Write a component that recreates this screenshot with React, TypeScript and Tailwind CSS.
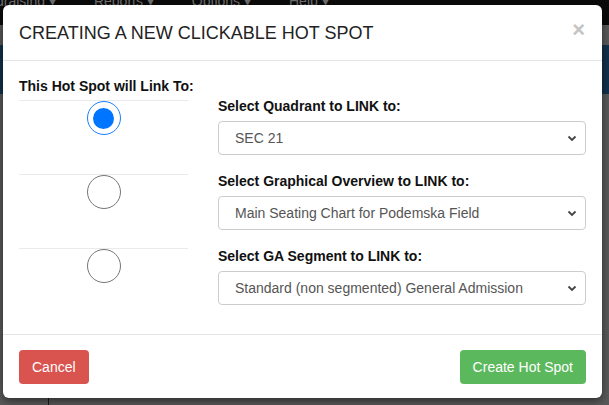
import React from 'react';

const links = [
  { label: "Select Quadrant to LINK to:", value: "SEC 21" },
  { label: "Select Graphical Overview to LINK to:", value: "Main Seating Chart for Podemska Field" },
  { label: "Select GA Segment to LINK to:", value: "Standard (non segmented) General Admission" }
];

function Chevron() {
  return (
    <svg width="10" height="7" viewBox="0 0 10 7" className="shrink-0">
      <path d="M1.5 1.5 L5 5 L8.5 1.5" fill="none" stroke="#444" strokeWidth="1.8" />
    </svg>
  );
}

function Radio({ checked }: { checked?: boolean }) {
  if (checked) {
    return (
      <div className="w-[34px] h-[34px] rounded-full border-[1.5px] border-[#1a7fff] bg-white flex items-center justify-center">
        <div className="w-[21px] h-[21px] rounded-full bg-[#0075ff]" />
      </div>
    );
  }
  return <div className="w-[34px] h-[34px] rounded-full border border-[#767676] bg-white" />;
}

export default function App() {
  return (
    <div className="relative w-[609px] h-[405px] overflow-hidden bg-[#595959]" style={{ fontFamily: "'Liberation Sans', Arial, sans-serif" }}>
      {/* page behind the backdrop */}
      <div className="h-[25px] bg-[#0b0b0b] overflow-hidden">
        <div className="flex gap-[38px] -mt-[9px] text-[14px] text-[#6f6f6f] whitespace-nowrap">
          <span className="-ml-[4px]">draising ▾</span>
          <span>Reports ▾</span>
          <span>Options ▾</span>
          <span>Help ▾</span>
        </div>
      </div>
      <div className="h-[20px]" />
      <div className="h-[49px] bg-[#12304c]" />
      <div className="absolute left-[48px] bottom-0 w-px h-[10px] bg-[#1a1a1a]" />

      {/* modal */}
      <div className="absolute left-[3px] top-[5px] w-[599px] h-[393px] bg-white rounded-[6px] flex flex-col shadow-[0_3px_9px_rgba(0,0,0,0.5)]">
        <div className="h-[56px] flex items-center justify-between pl-4 pr-[17px] border-b border-[#e5e5e5]">
          <h4 className="text-[18px] text-[#222] leading-none pt-[1px]">CREATING A NEW CLICKABLE HOT SPOT</h4>
          <span className="text-[22px] font-bold text-[#c4c4c4] leading-none -mt-[6px]">×</span>
        </div>

        <div className="flex-1 flex pl-4 pr-4 pt-[15px]">
          <div className="w-[169px]">
            <div className="text-[14px] font-bold text-[#111] leading-[20px] mb-[4px] whitespace-nowrap">This Hot Spot will Link To:</div>
            {[true, false, false].map((c, i) => (
              <div key={i} className="h-[74px] border-t border-[#eaeaea] flex justify-center">
                <Radio checked={c} />
              </div>
            ))}
          </div>

          <div className="ml-[30px] flex-1 pt-[20px] flex flex-col gap-[16px]">
            {links.map((l) => (
              <div key={l.label}>
                <div className="text-[14px] font-bold text-[#111] leading-[20px] mb-[5px]">{l.label}</div>
                <div className="h-[34px] w-[368px] border border-[#cccccc] rounded-[4px] flex items-center justify-between pl-4 pr-[8px] text-[14px] text-[#555]">
                  <span>{l.value}</span>
                  <Chevron />
                </div>
              </div>
            ))}
          </div>
        </div>

        <div className="h-[64px] border-t border-[#e5e5e5] flex items-start justify-between px-4 pt-[15px]">
          <button className="h-[34px] px-[13px] rounded-[4px] bg-[#d9534f] text-white text-[14px]">Cancel</button>
          <button className="h-[34px] px-[13px] rounded-[4px] bg-[#5cb85c] text-white text-[14px]">Create Hot Spot</button>
        </div>
      </div>
    </div>
  );
}
